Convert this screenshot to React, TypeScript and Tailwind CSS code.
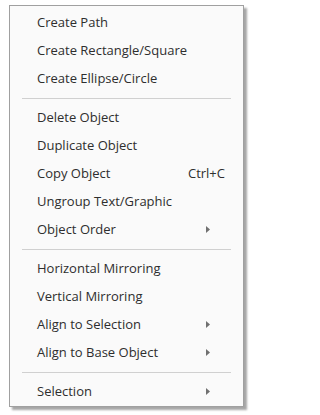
type Item = { label: string; shortcut?: string; sub?: boolean } | "sep"

const items: Item[] = [
  { label: "Create Path" },
  { label: "Create Rectangle/Square" },
  { label: "Create Ellipse/Circle" },
  "sep",
  { label: "Delete Object" },
  { label: "Duplicate Object" },
  { label: "Copy Object", shortcut: "Ctrl+C" },
  { label: "Ungroup Text/Graphic" },
  { label: "Object Order", sub: true },
  "sep",
  { label: "Horizontal Mirroring" },
  { label: "Vertical Mirroring" },
  { label: "Align to Selection", sub: true },
  { label: "Align to Base Object", sub: true },
  "sep",
  { label: "Selection", sub: true },
]

function SubArrow() {
  return (
    <svg width="4" height="7" viewBox="0 0 4 7" className="absolute left-[196px] top-[10px]">
      <path d="M0 0 L4 3.5 L0 7 Z" fill="#707070" />
    </svg>
  )
}

export default function App() {
  return (
    <div className="w-[252px] h-[415px] bg-white pl-[9px] pt-[5px]">
      <div
        className="w-[235px] border border-[#a0a0a0] bg-[#fafafa] pt-[3px] shadow-[3px_3px_2px_rgba(0,0,0,0.35)]"
        style={{ fontFamily: '"Open Sans", "Noto Sans", sans-serif' }}
      >
        {items.map((it, i) =>
          it === "sep" ? (
            <div key={i} className="h-[11px] flex items-center px-[12px]">
              <div className="h-px w-full bg-[#d0d0d0]" />
            </div>
          ) : (
            <div
              key={i}
              className="relative h-[28px] flex items-center pl-[27px] pr-[18px] text-[13px] text-[#2e2e2e]"
            >
              <span className="flex-1">{it.label}</span>
              {it.shortcut && <span>{it.shortcut}</span>}
              {it.sub && <SubArrow />}
            </div>
          )
        )}
      </div>
    </div>
  )
}
